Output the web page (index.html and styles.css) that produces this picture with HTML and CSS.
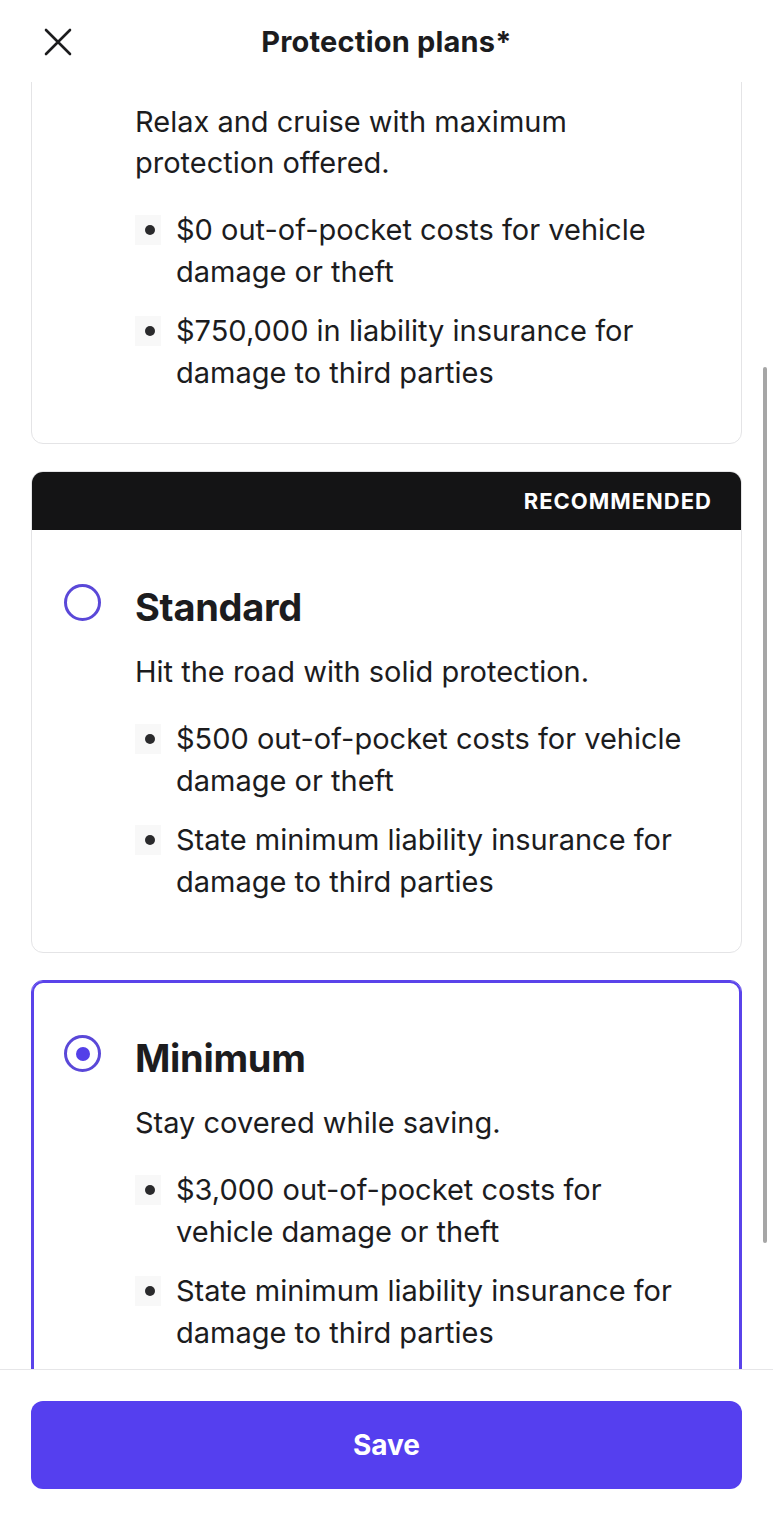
FILE: index.html
```html
<!DOCTYPE html>
<html lang="en">
<head>
<meta charset="utf-8">
<title>Protection plans</title>
<link rel="stylesheet" href="styles.css">
</head>
<body>
<div class="screen">
  <header class="topbar">
    <button class="close" aria-label="Close">
      <svg width="28" height="28" viewBox="0 0 28 28"><path d="M2 2 L26 26 M26 2 L2 26" stroke="#1c1c1e" stroke-width="2.6" stroke-linecap="round" fill="none"/></svg>
    </button>
    <h1 class="topbar__title">Protection plans*</h1>
  </header>

  <main class="scroller">
    <div class="plans">
      <section class="card card--partial">
        <div class="card__body">
          <p class="card__desc">Relax and cruise with maximum protection offered.</p>
          <ul class="perks">
            <li class="perk"><span class="perk__mark"><span class="perk__dot"></span></span><span>$0 out-of-pocket costs for vehicle damage or theft</span></li>
            <li class="perk"><span class="perk__mark"><span class="perk__dot"></span></span><span>$750,000 in liability insurance for damage to third parties</span></li>
          </ul>
        </div>
      </section>

      <section class="card">
        <div class="card__band">RECOMMENDED</div>
        <div class="card__body">
          <div class="card__head">
            <span class="radio"></span>
            <h2 class="card__title">Standard</h2>
          </div>
          <p class="card__desc">Hit the road with solid protection.</p>
          <ul class="perks">
            <li class="perk"><span class="perk__mark"><span class="perk__dot"></span></span><span>$500 out-of-pocket costs for vehicle damage or theft</span></li>
            <li class="perk"><span class="perk__mark"><span class="perk__dot"></span></span><span>State minimum liability insurance for damage to third parties</span></li>
          </ul>
        </div>
      </section>

      <section class="card card--selected">
        <div class="card__body">
          <div class="card__head">
            <span class="radio radio--on"></span>
            <h2 class="card__title">Minimum</h2>
          </div>
          <p class="card__desc">Stay covered while saving.</p>
          <ul class="perks">
            <li class="perk"><span class="perk__mark"><span class="perk__dot"></span></span><span>$3,000 out-of-pocket costs for vehicle damage or theft</span></li>
            <li class="perk"><span class="perk__mark"><span class="perk__dot"></span></span><span>State minimum liability insurance for damage to third parties</span></li>
          </ul>
        </div>
      </section>
    </div>
    <div class="scrollbar"></div>
  </main>

  <footer class="footer">
    <button class="save">Save</button>
  </footer>
</div>
</body>
</html>
```

FILE: styles.css
```css
* { box-sizing: border-box; }
html, body { margin: 0; padding: 0; background: #fff; }
body {
  font-family: Inter, "Noto Sans", "Liberation Sans", sans-serif;
  color: #1c1c1e;
}
.screen {
  width: 773px;
  height: 1532px;
  display: flex;
  flex-direction: column;
  overflow: hidden;
}
.topbar {
  height: 82px;
  flex: none;
  position: relative;
  display: flex;
  align-items: center;
  justify-content: center;
  background: #fff;
}
.close {
  position: absolute;
  left: 44px;
  top: 28px;
  width: 28px;
  height: 28px;
  padding: 0;
  border: 0;
  background: none;
  display: flex;
}
.topbar__title {
  margin: 0;
  font-size: 29px;
  font-weight: 700;
  line-height: 34px;
  letter-spacing: 0.2px;
  padding-top: 2px;
}
.scroller {
  flex: 1;
  position: relative;
  overflow: hidden;
}
.plans {
  display: flex;
  flex-direction: column;
  gap: 27px;
  padding: 0 31px;
  margin-top: -20px;
}
.card {
  border: 1px solid #e4e4e6;
  border-radius: 12px;
  overflow: hidden;
  background: #fff;
}
.card--selected {
  border-color: #5a43ea;
  box-shadow: inset 0 0 0 2px #5a43ea;
}
.card__band {
  height: 58px;
  background: #141415;
  color: #fff;
  font-size: 22px;
  font-weight: 700;
  letter-spacing: 1px;
  line-height: 58px;
  text-align: right;
  padding-right: 29px;
}
.card__body {
  padding: 54px 41px 49px 32px;
}
.card--partial .card__body {
  padding-top: 38px;
}
.card__head {
  display: flex;
  align-items: center;
  gap: 34px;
}
.radio {
  width: 37px;
  height: 37px;
  flex: none;
  border-radius: 50%;
  border: 3px solid #5a48d8;
  margin-bottom: 8px;
  display: flex;
  align-items: center;
  justify-content: center;
}
.radio--on::after {
  content: "";
  width: 14px;
  height: 14px;
  border-radius: 50%;
  background: #5440e8;
}
.card__title {
  margin: 0;
  font-size: 38px;
  font-weight: 700;
  line-height: 44px;
  letter-spacing: -0.3px;
}
.card__desc {
  margin: 22px 0 0 71px;
  font-size: 29px;
  line-height: 41px;
}
.card--partial .card__desc { margin-top: 0; }
.perks {
  list-style: none;
  margin: 26px 0 0 71px;
  padding: 0;
  display: flex;
  flex-direction: column;
  gap: 17px;
}
.perk {
  display: flex;
  align-items: flex-start;
  font-size: 29px;
  line-height: 42px;
}
.perk__mark {
  width: 26px;
  height: 30px;
  flex: none;
  margin-top: 6px;
  margin-right: 15px;
  background: #f8f8f8;
  display: flex;
  align-items: center;
  justify-content: center;
}
.perk__dot {
  width: 10px;
  height: 10px;
  border-radius: 50%;
  background: #2a2a2c;
  margin-left: 4px;
}
.scrollbar {
  position: absolute;
  right: 6px;
  top: 285px;
  width: 4px;
  height: 876px;
  border-radius: 2px;
  background: #a6a6a6;
}
.footer {
  flex: none;
  border-top: 1px solid #e6e6e8;
  padding: 31px 31px 43px;
  background: #fff;
}
.save {
  display: block;
  width: 100%;
  height: 88px;
  border: 0;
  border-radius: 12px;
  background: #553fef;
  color: #fff;
  font-family: Inter, "Noto Sans", "Liberation Sans", sans-serif;
  font-size: 28px;
  font-weight: 700;
}
```
